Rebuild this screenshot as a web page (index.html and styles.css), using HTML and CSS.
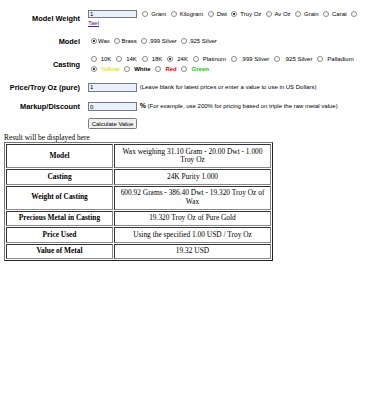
FILE: index.html
```html
<!DOCTYPE html>
<html>
<head>
	<title>Metal Value Calculator</title>
<link rel="stylesheet" href="styles.css">
</head>
<body>
	<table class="calc">
		<tr>
			<td class="lbl">Model Weight</td>
			<td class="fld">
				<input type="text" class="num" value="1">
				<label><input type="radio" name="unit"> Gram</label>
				<label><input type="radio" name="unit"> Kilogram</label>
				<label><input type="radio" name="unit"> Dwt</label>
				<label><input type="radio" name="unit" checked> Troy Oz</label>
				<label><input type="radio" name="unit"> Av Oz</label>
				<label><input type="radio" name="unit"> Grain</label>
				<label><input type="radio" name="unit"> Carat</label>
				<label><input type="radio" name="unit"> <a href="#" class="tael">Tael</a></label>
			</td>
		</tr>
		<tr>
			<td class="lbl">Model</td>
			<td class="fld">
				<label><input type="radio" name="model" checked>Wax</label>
				<label><input type="radio" name="model">Brass</label>
				<label><input type="radio" name="model">.999 Silver</label>
				<label><input type="radio" name="model">.925 Silver</label>
			</td>
		</tr>
		<tr>
			<td class="lbl">Casting</td>
			<td class="fld wide">
				<div>
					<label><input type="radio" name="metal"> 10K</label>
					<label><input type="radio" name="metal"> 14K</label>
					<label><input type="radio" name="metal"> 18K</label>
					<label><input type="radio" name="metal" checked> 24K</label>
					<label><input type="radio" name="metal"> Platinum</label>
					<label><input type="radio" name="metal"> .999 Silver</label>
					<label><input type="radio" name="metal"> .925 Silver</label>
					<label><input type="radio" name="metal"> Palladium</label>
				</div>
				<div>
					<label><input type="radio" name="color" checked> <b class="yellow">Yellow</b></label>
					<label><input type="radio" name="color"> <b>White</b></label>
					<label><input type="radio" name="color"> <b class="red">Red</b></label>
					<label><input type="radio" name="color"> <b class="green">Green</b></label>
				</div>
			</td>
		</tr>
		<tr>
			<td class="lbl">Price/Troy Oz (pure)</td>
			<td class="fld">
				<input type="text" class="num" value="1">
				<span class="hint">(Leave blank for latest prices or enter a value to use in US Dollars)</span>
			</td>
		</tr>
		<tr>
			<td class="lbl">Markup/Discount</td>
			<td class="fld">
				<input type="text" class="num" value="0">
				<b class="pct">%</b>
				<span class="hint">(For example, use 200% for pricing based on triple the raw metal value)</span>
			</td>
		</tr>
		<tr class="last">
			<td class="lbl"></td>
			<td class="fld"><button class="go">Calculate Value</button></td>
		</tr>
	</table>

	<div class="note">Result will be displayed here</div>
	<table class="res">
		<tr><th>Model</th><td>Wax weighing 31.10 Gram - 20.00 Dwt - 1.000 Troy Oz</td></tr>
		<tr><th>Casting</th><td>24K Purity 1.000</td></tr>
		<tr><th>Weight of Casting</th><td>600.92 Grams - 386.40 Dwt - 19.320 Troy Oz of Wax</td></tr>
		<tr><th>Precious Metal in Casting</th><td>19.320 Troy Oz of Pure Gold</td></tr>
		<tr><th>Price Used</th><td>Using the specified 1.00 USD / Troy Oz</td></tr>
		<tr><th>Value of Metal</th><td>19.32 USD</td></tr>
	</table>
</body>
</html>
```

FILE: styles.css
```css
body {
	margin: 4px;
	font-family: "Liberation Serif", serif;
	font-size: 7.4px;
	color: #000;
	background: #fff;
}

/* form */
.calc {
	border-collapse: collapse;
	margin-top: 1px;
	font-family: "Liberation Sans", Arial, sans-serif;
}

.calc td {
	padding: 4.5px 4px;
	vertical-align: middle;
}
.calc .last td {
	padding-top: 2px;
	padding-bottom: 5px;
}

.lbl {
	width: 72px;
	text-align: right;
	white-space: nowrap;
	font-weight: bold;
	font-size: 7.4px;
}

.fld {
	font-size: 6px;
	line-height: 9.3px;
}

.wide label {
	margin-right: 0.5px;
}
.wide input[type=radio] {
	margin-right: 2.5px;
}

input.num {
	box-sizing: border-box;
	width: 49px;
	height: 8.5px;
	margin: 0 1px 0 0;
	padding: 0 1px;
	border: 1px solid #7a7a7a;
	background: #e8f0fe;
	font: 6px "Liberation Sans", Arial, sans-serif;
	vertical-align: middle;
}

input[type=radio] {
	-webkit-appearance: none;
	appearance: none;
	box-sizing: border-box;
	width: 6px;
	height: 6px;
	margin: 0 1.5px 0 2.5px;
	border: 1px solid #8a8a8a;
	border-radius: 50%;
	background: #fff;
	vertical-align: -1px;
}
input[type=radio]:checked {
	background: radial-gradient(circle, #444 0 35%, #fff 55%);
}

.tael {
	color: #551a8b;
}

.yellow {color: #e8e800}
.red {color: #e00000}
.green {color: #00d000}

.pct {
	font-size: 7px;
}

.go {
	box-sizing: border-box;
	width: 49px;
	height: 11px;
	padding: 0 2px;
	border: 1px solid #7a7a7a;
	border-radius: 1.5px;
	background: #efefef;
	font: 6px "Liberation Sans", Arial, sans-serif;
	color: #000;
	vertical-align: middle;
}

/* results */
.note {
	line-height: 8px;
}

.res {
	width: 269px;
	border: 1.5px outset #777;
	border-spacing: 1px;
	line-height: 8.5px;
}
.res th, .res td {
	border: 1px inset #888;
	padding: 2.5px 2px;
	text-align: center;
}
.res th {
	width: 101px;
}
```
